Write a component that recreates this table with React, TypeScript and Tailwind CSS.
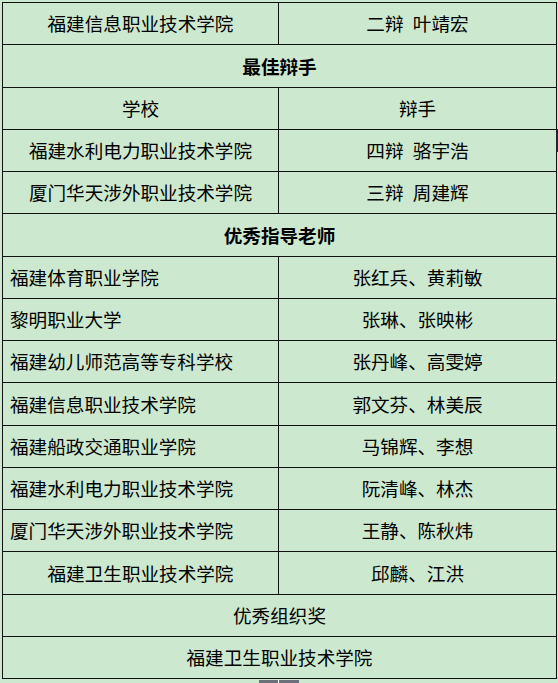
import React from 'react'

type Row =
  | { kind: 'pair'; left: string; right: string; align?: 'left' | 'center' }
  | { kind: 'span'; text: string; bold?: boolean }

const rows: Row[] = [
  { kind: 'pair', left: '福建信息职业技术学院', right: '二辩\u2002叶靖宏' },
  { kind: 'span', text: '最佳辩手', bold: true },
  { kind: 'pair', left: '学校', right: '辩手' },
  { kind: 'pair', left: '福建水利电力职业技术学院', right: '四辩\u2002骆宇浩' },
  { kind: 'pair', left: '厦门华天涉外职业技术学院', right: '三辩\u2002周建辉' },
  { kind: 'span', text: '优秀指导老师', bold: true },
  { kind: 'pair', left: '福建体育职业学院', right: '张红兵、黄莉敏', align: 'left' },
  { kind: 'pair', left: '黎明职业大学', right: '张琳、张映彬', align: 'left' },
  { kind: 'pair', left: '福建幼儿师范高等专科学校', right: '张丹峰、高雯婷', align: 'left' },
  { kind: 'pair', left: '福建信息职业技术学院', right: '郭文芬、林美辰', align: 'left' },
  { kind: 'pair', left: '福建船政交通职业学院', right: '马锦辉、李想', align: 'left' },
  { kind: 'pair', left: '福建水利电力职业技术学院', right: '阮清峰、林杰', align: 'left' },
  { kind: 'pair', left: '厦门华天涉外职业技术学院', right: '王静、陈秋炜', align: 'left' },
  { kind: 'pair', left: '福建卫生职业技术学院', right: '邱麟、江洪' },
  { kind: 'span', text: '优秀组织奖' },
  { kind: 'span', text: '福建卫生职业技术学院' },
]

export default function App() {
  return (
    <div
      className="relative w-[558px] h-[683px] overflow-hidden bg-[#cce8cf] pt-[2px] pl-[2px] text-black"
      style={{ fontFamily: '"Noto Sans CJK SC", "Noto Sans", sans-serif' }}
    >
      <table className="w-[554px] border-collapse table-fixed text-[18.6px] leading-none">
        <colgroup>
          <col className="w-[276px]" />
          <col className="w-[278px]" />
        </colgroup>
        <tbody>
          {rows.map((r, i) =>
            r.kind === 'span' ? (
              <tr key={i} className="h-[42.25px]">
                <td
                  colSpan={2}
                  className={`border border-[#111] text-center p-0 ${r.bold ? 'font-bold' : 'font-normal'}`}
                >
                  {r.text}
                </td>
              </tr>
            ) : (
              <tr key={i} className="h-[42.25px]">
                <td
                  className={`border border-[#111] p-0 whitespace-nowrap ${
                    r.align === 'left' ? 'text-left pl-[7px]' : 'text-center'
                  }`}
                >
                  {r.left}
                </td>
                <td className="border border-[#111] p-0 text-center whitespace-pre">{r.right}</td>
              </tr>
            )
          )}
        </tbody>
      </table>

      {/* scrollbar remnants over the edges */}
      <div className="absolute left-[556px] top-[129px] w-[2px] h-[23px] bg-[#2c1c3a]" />
      <div className="absolute left-[259px] top-[680px] w-[40px] h-[3px] bg-[#6c7079]">
        <div className="absolute left-[19px] top-0 w-[1px] h-[3px] bg-white" />
      </div>
    </div>
  )
}
